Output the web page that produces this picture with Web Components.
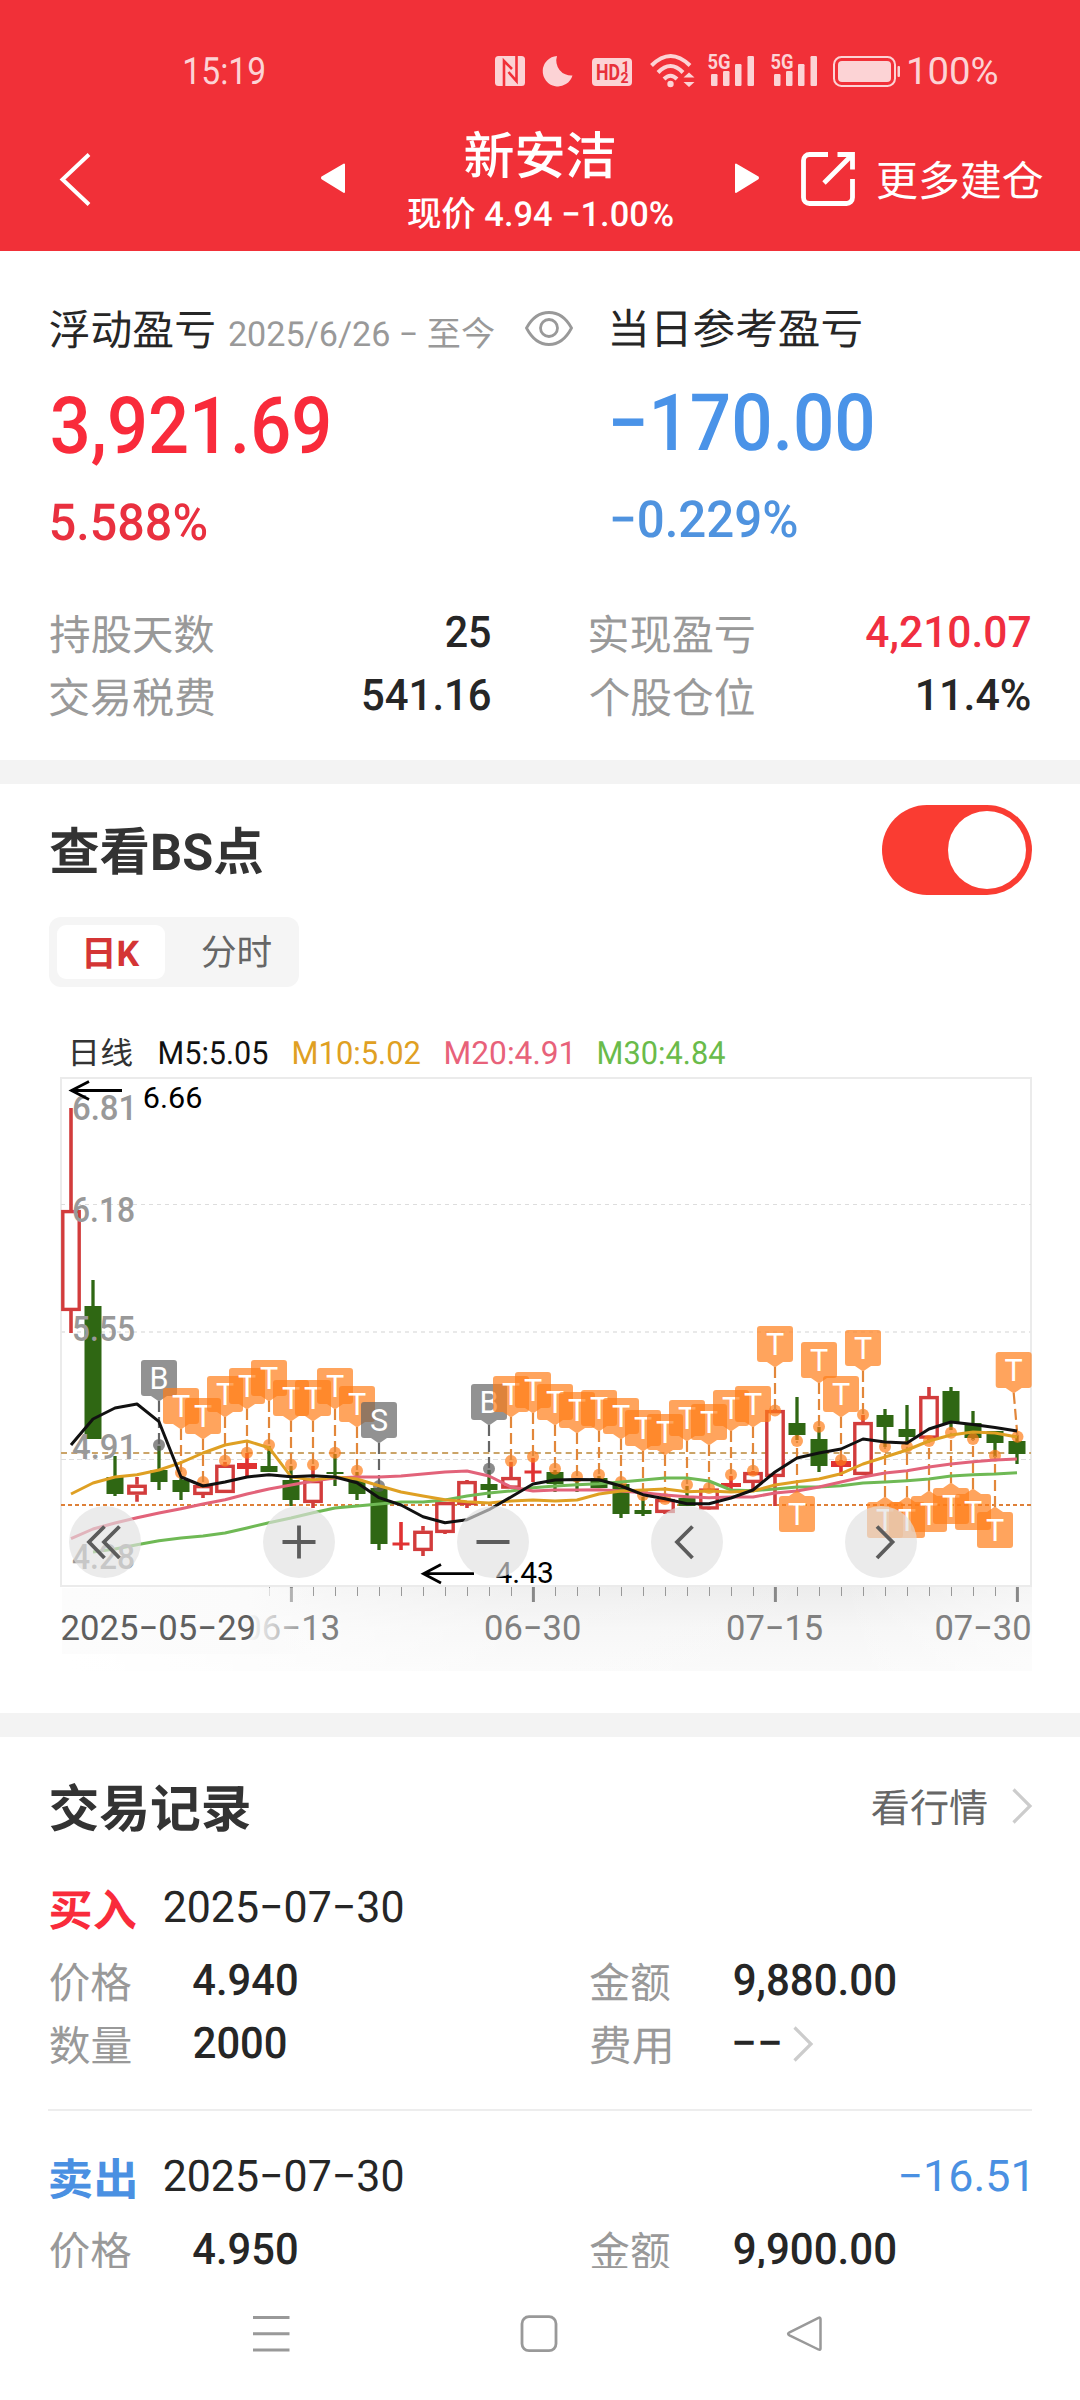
<!DOCTYPE html>
<html lang="zh-CN">
<head>
<meta charset="utf-8">
<title>新安洁</title>
<style>
html,body{margin:0;padding:0;background:#fff}
body{width:1080px;height:2400px;overflow:hidden;font-family:Roboto,"Noto Sans CJK SC",sans-serif;color:#262626}
</style>
</head>
<body>
<position-page></position-page>
<script>
const FAMILY = 'Roboto, "Noto Sans CJK SC", sans-serif';
const pen = document.createElement('canvas').getContext('2d');

/* Ink extents of a text, measured at ten times its size so that rounding does not matter. */
function ink(t, s, wt) {
  pen.font = `${wt} ${s * 10}px ${FAMILY}`;
  const m = pen.measureText(t);
  return { left: m.actualBoundingBoxLeft / 10, width: (m.actualBoundingBoxLeft + m.actualBoundingBoxRight) / 10 };
}

function define(name, html) {
  customElements.define(name, class extends HTMLElement {
    connectedCallback() {
      if (this.shadowRoot) return;
      const root = this.attachShadow({ mode: 'open' });
      const tpl = document.createElement('template');
      tpl.innerHTML = typeof html === 'function' ? html(this) : html;
      root.append(tpl.content.cloneNode(true));
    }
  });
}

/* A single line of text whose ink spans exactly `w` pixels; the box is one cap height tall and ends on the baseline. */
customElements.define('fit-text', class extends HTMLElement {
  connectedCallback() {
    if (this.shadowRoot) return;
    const w = +this.getAttribute('w'), s = +this.getAttribute('s'), wt = this.getAttribute('wt') || 400;
    const text = this.getAttribute('t');
    const root = this.attachShadow({ mode: 'open' });
    const m = ink(text, s, wt), k = w / m.width;
    const h = (s * 0.711).toFixed(2);
    root.innerHTML = `<style>
      :host{display:block;flex:none;width:${w}px;height:${h}px}
      span{display:block;width:max-content;white-space:pre;text-rendering:geometricPrecision;font:${wt} ${s}px/${h}px ${FAMILY};transform-origin:0 0;
      transform:translate(${(m.left * k).toFixed(2)}px,${(s * 0.0136).toFixed(2)}px) scaleX(${k.toFixed(4)})}
    </style><span></span>`;
    root.querySelector('span').textContent = text;
  }
});
const T = (t, w, s, style = '', wt = 400) => `<fit-text t="${t}" w="${w}" s="${s}" wt="${wt}" style="${style}"></fit-text>`;
const ROW = `.r{display:flex;align-items:flex-end;box-sizing:border-box}`;

define('signal-icon', `<style>:host{display:block;flex:none;width:46px;height:36px}svg{display:block;overflow:visible}</style>
<svg width="46" height="36" viewBox="708 52 46 36" fill="#fcd3d5"><text x="707.5" y="69" font-family="Roboto" font-weight="700" font-size="20.5" textLength="23" lengthAdjust="spacingAndGlyphs">5G</text>
<rect x="711" y="74" width="6.5" height="12" rx="1.2"/><rect x="723" y="71" width="6.5" height="15" rx="1.2"/><rect x="735" y="64" width="6.5" height="22" rx="1.2"/><rect x="747.5" y="56" width="6.5" height="30" rx="1.2"/></svg>`);

define('status-bar', `<style>
:host{display:flex;height:36px;padding-top:52px;padding-left:185px;color:#fcd3d5}
svg{display:block;flex:none;overflow:visible}.c{display:flex;align-items:flex-end;height:32.500px}
</style>
<div class="c">${T('15:19', 79, 37.5)}</div>
<svg style="margin-left:231px" width="30" height="36" viewBox="495 52 30 36"><rect x="495" y="56" width="30" height="30" rx="3.5" fill="#fcd3d5"/><path d="M504 86V61l8 8M516.500 56v25l-8-9" fill="none" stroke="#f13038" stroke-width="2.600"/></svg>
<svg style="margin-left:18px" width="30" height="36" viewBox="543 52 30 36"><path d="M557 56A15.200 15.200 0 1 0 572.500 75.500A15 15 0 0 1 557 56z" fill="#fcd3d5"/></svg>
<svg style="margin-left:19px" width="40" height="36" viewBox="592 52 40 36"><rect x="592" y="58" width="40" height="28" rx="4" fill="#fcd3d5"/><g fill="#e8303a" font-family="Roboto" font-weight="700"><text x="596" y="80" font-size="22" textLength="24" lengthAdjust="spacingAndGlyphs">HD</text><text x="621.500" y="71.500" font-size="14">1</text><text x="620.500" y="83" font-size="14">2</text></g></svg>
<svg style="margin-left:18px" width="45" height="36" viewBox="650 52 45 36"><g fill="none" stroke="#fcd3d5" stroke-width="4"><path d="M651.500 65.500Q670.500 46.500 690 65.500M658 72.500Q670.500 59.500 683 72.500M664 79Q670.500 72.500 677 79"/></g><circle cx="670.500" cy="84" r="3.200" fill="#fcd3d5"/><path d="M683.500 77.500l5.500-5 5.500 5zM683.500 82l5.500 5 5.500-5z" fill="#fcd3d5"/></svg>
<signal-icon style="margin-left:13px"></signal-icon>
<signal-icon style="margin-left:17px"></signal-icon>
<svg style="margin-left:16px" width="67" height="36" viewBox="833 52 67 36"><rect x="834" y="57" width="61" height="29" rx="7.500" fill="none" stroke="#fcd3d5" stroke-width="2"/><rect x="838" y="61" width="53" height="21" rx="4" fill="#fcd3d5"/><rect x="897.500" y="66" width="2.500" height="11" rx="1" fill="#fcd3d5"/></svg>
<div class="c" style="margin-left:8.500px">${T('100%', 88.5, 37.5)}</div>`);

define('app-header', `<style>
:host{display:block;height:251px;background:#f13038;color:#fff}
.bar{display:flex;height:163px}svg{display:block;flex:none}${ROW}
.mid{width:265px;margin-left:62px}
</style>
<status-bar></status-bar>
<div class="bar">
<svg style="margin:62px 0 0 58px" width="34" height="60" viewBox="58 150 34 60"><path d="M89 154.500L62.500 179.500L89 204.500" fill="none" stroke="#fff" stroke-width="4"/></svg>
<svg style="margin:72px 0 0 228px" width="26" height="36" viewBox="320 160 26 36"><path d="M344 164.500V192L322.500 178.700Q321.500 178 322.500 177z" fill="#fff" stroke="#fff" stroke-width="2" stroke-linejoin="round"/></svg>
<div class="mid"><div class="r" style="height:87px;padding-left:57px">${T('新安洁', 149, 51, '', 500)}</div>
<div class="r" style="height:53px">${T('现价 4.94 −1.00%', 265, 34.500, '', 500)}</div></div>
<svg style="margin:72px 0 0 61px" width="26" height="36" viewBox="734 160 26 36"><path d="M736 164.500V192L757.500 178.700Q758.500 178 757.500 177z" fill="#fff" stroke="#fff" stroke-width="2" stroke-linejoin="round"/></svg>
<svg style="margin:62px 0 0 40px" width="58" height="60" viewBox="800 150 58 60"><path d="M828 154.500H809.500a6 6 0 0 0-6 6V197.500a6 6 0 0 0 6 6H846.500a6 6 0 0 0 6-6V179M837.500 154.500H852.500V169.500M852 155L824 183" fill="none" stroke="#fff" stroke-width="4.800"/></svg>
<div class="r" style="height:109px;margin-left:20px">${T('更多建仓', 165, 42)}</div>
</div>`);

define('profit-summary', `<style>
:host{display:block;height:509px}svg{display:block;flex:none}${ROW}.g{color:#999}.red{color:#ee2e3e}.blue{color:#4a91e4}
</style>
<div class="r" style="height:95px;padding-left:49.500px">${T('浮动盈亏', 164, 42)}
${T('2025/6/26 − 至今', 265, 34.500, 'margin:0 0 -2px 15.500px;color:#999')}
<svg style="margin:0 0 -1px 28px" width="54" height="38" viewBox="522 309 54 38" fill="none" stroke="#999" stroke-width="2.800"><path d="M526.500 328C533 316 541 312.500 549 312.500S565 316 571.500 328C565 340.500 557 344.500 549 344.500S533 340.500 526.500 328z"/><circle cx="549" cy="328" r="8.500"/></svg>
${T('当日参考盈亏', 249, 42, 'margin:0 0 1px 36px')}</div>
<div class="r" style="height:108px;padding-left:52px">${T('3,921.69', 276.500, 79, 'color:#f92b3b', 500)}${T('−170.00', 261, 79, 'margin:0 0 3px 283.500px;color:#4a93e8', 500)}</div>
<div class="r" style="height:87.500px;padding-left:50.500px">${T('5.588%', 155.5, 51, 'color:#e9303f', 500)}${T('−0.229%', 185, 51, 'margin:0 0 3.500px 406px;color:#4f93df', 500)}</div>
<div class="r" style="height:109px;padding-left:50px">${T('持股天数', 164, 42, 'color:#999')}${T('25', 44, 43.500, 'margin:0 0 3px 232px', 500)}${T('实现盈亏', 164, 42, 'color:#999;margin-left:100px')}${T('4,210.07', 164, 43.500, 'margin:0 0 3px 112px;color:#f02e40', 500)}</div>
<div class="r" style="height:63px;padding-left:50px">${T('交易税费', 164, 42, 'color:#999')}${T('541.16', 127, 43.500, 'margin:0 0 3px 149px', 500)}${T('个股仓位', 164, 42, 'color:#999;margin-left:100px')}${T('11.4%', 112, 43.500, 'margin:0 0 3px 164px', 500)}</div>`);

define('toggle-switch', `<style>:host{display:flex;box-sizing:border-box;width:150px;height:90px;padding:6px;justify-content:flex-end;border-radius:45px;background:#fa3c32}i{width:78px;height:78px;border-radius:50%;background:#fff}</style><i></i>`);

define('period-tabs', `<style>
:host{display:flex;box-sizing:border-box;width:250px;height:70px;padding:8px;border-radius:12px;background:#f5f5f5}
div{display:flex;align-items:flex-end;justify-content:center;height:54px;box-sizing:border-box;padding-bottom:12px}
.on{width:108px;padding-left:4px;background:#fff;border-radius:9px;color:#d43535}.off{width:126px;padding-left:16px;color:#666}
</style><div class="on">${T('日K', 54, 35.500, '', 700)}</div><div class="off">${T('分时', 69, 36)}</div>`);

/* Candles: [kind, high, body top, body bottom, low]; g falling, r rising hollow, f rising solid. */
const CANDLES = [
['r',1108,1210,1311,1333],['g',1280,1306,1439,1439],['g',1456,1477,1494,1496],['r',1477,1484.700,1494.700,1501.700],['g',1446,1470,1482,1490],['g',1478,1480,1492,1500],['r',1484,1485,1495,1498],['r',1462,1464.700,1493,1493],['f',1453,1463,1469,1476],['g',1446,1466,1472,1472],['g',1466,1480,1500,1506],
['r',1466,1480,1503,1508],['g',1454,1472,1474,1486],['g',1472,1480,1494,1500],['g',1487,1488,1544,1550],['f',1522,1542.500,1545.500,1550],['r',1526,1530.700,1551,1556],['r',1502,1502,1533,1534],['r',1480,1481,1505,1508],['g',1470,1484,1490,1498],['r',1462,1477,1488.700,1488.700],['f',1458,1470.500,1473.500,1482],
['g',1470,1472,1484,1492],['g',1478,1479,1481,1492],['g',1476,1478,1488,1488],['g',1482,1484,1514,1518],['g',1497,1510,1514,1516],['r',1498,1499,1513,1514],['g',1486,1498,1506,1506],['r',1488,1488.500,1509.500,1510],['f',1476,1483,1487,1489],['r',1471,1472,1483,1490],['r',1409,1410,1477,1506],
['g',1397,1423,1435,1440],['g',1427,1439,1466,1472],['f',1460,1461,1467,1476],['r',1415,1422,1475,1475],['g',1409,1415,1427,1447],['g',1405,1429,1437,1445],['r',1387,1396,1438.700,1440],['g',1387,1391,1423,1430],['g',1411,1423,1438,1440],['g',1431,1431,1443,1457],['g',1435,1441,1454,1464]];
/* Trade marks: [candle, letter, anchor y, badge top]. */
const MARKS = [[4,'B',1445,1360],[5,'T',1472.700,1388],[6,'T',1482,1398],[7,'T',1460.700,1376],[8,'T',1452.700,1368],[9,'T',1445,1360],[10,'T',1464.700,1380],[11,'T',1464.700,1380],[12,'T',1452.700,1368],[13,'T',1470.700,1386],[14,'S',1486,1402],
[19,'B',1468.700,1384],[20,'T',1461,1376],[21,'T',1456.700,1372],[22,'T',1468.700,1384],[23,'T',1476.700,1392],[24,'T',1474.700,1390],[25,'T',1482,1398],[26,'T',1495,1410],[27,'T',1499,1414],[28,'T',1484.700,1400],[29,'T',1488,1404],[30,'T',1474.700,1390],[31,'T',1470.700,1386],[32,'T',1410.500,1326],
[33,'T',1441,1496],[34,'T',1426.700,1342],[35,'T',1460,1376],[36,'T',1414.700,1330],[37,'T',1446.700,1502],[38,'T',1446.700,1502],[39,'T',1441,1496],[40,'T',1432.700,1488],[41,'T',1439,1494],[42,'T',1455.700,1512],[43,'T',1436.700,1352]];
const LINES = {
'#111':[0,1445,1419,1408,1404,1421.700,1477,1486,1482,1477,1474.700,1476.700,1475.700,1477,1482.700,1497.700,1505,1516.700,1522.700,1519.700,1509.700,1497,1484,1480,1479.500,1479.700,1486,1494.700,1498.700,1503.700,1503.700,1498,1490,1472,1458,1453,1449,1439,1442,1443,1429,1422,1424.500,1427.500,1431],
'#dfa023':[0,1494,1483,1477,1474.700,1470,1462.700,1453,1445,1441,1447.700,1476.700,1480,1477,1479,1485.700,1492,1496,1499.700,1501.700,1503,1501,1500,1501,1500,1494,1491,1490,1489,1491.700,1491,1492,1491,1485,1481.700,1479,1473.700,1464,1457,1450,1441,1435,1432,1433,1437],
'#e2637a':[0,1538.700,1529,1523,1517.700,1513,1508.700,1504,1499.700,1494,1489,1485,1481,1478,1477,1477,1476,1474,1472,1471,1476,1487,1491,1490,1490,1489.700,1491,1492.700,1495,1496.700,1497.700,1497,1497,1493,1491,1487,1482,1477,1473,1470.700,1467,1464,1461.700,1460,1459],
'#6fb955':[1,1552,1549,1544.700,1540.700,1538,1536,1533,1528,1522.700,1518,1512.700,1508,1506,1504,1502,1502,1500,1496,1493,1491,1487.700,1486,1484.700,1483.700,1482,1480,1478,1478,1481,1490,1490.700,1489,1487,1487,1485.700,1483,1482,1480.700,1479,1476,1474.700,1474,1472.700]};
const X = i => 71 + 22 * i;

function label(t, x, baseline, w, s, fill, wt = 400) {
  const m = ink(t, s, wt), k = w / m.width;
  return `<text transform="translate(${x + m.left * k} ${baseline}) scale(${k} 1)" font-family='${FAMILY}' font-size="${s}" font-weight="${wt}" fill="${fill}">${t}</text>`;
}
function candle([k, hi, a, b, lo], i) {
  const x = X(i), c = k === 'g' ? '#2f6713' : k === 'r' ? '#d23c3c' : '#e03232';
  if (k === 'g') return `<path d="M${x} ${hi}V${lo}" stroke="${c}" stroke-width="3.300"/><rect x="${x - 8.500}" y="${a}" width="17" height="${b - a}" fill="${c}"/>`;
  if (k === 'f') { const h = b - a > 3.500 ? 10 : 8.500; return `<path d="M${x} ${hi}V${lo}" stroke="${c}" stroke-width="3.600"/><rect x="${x - h}" y="${a}" width="${2 * h}" height="${b - a}" fill="${c}"/>`; }
  return `<path d="M${x} ${hi}V${a}M${x} ${b}V${lo}" stroke="${c}" stroke-width="3.600"/><rect x="${x - 8.200}" y="${a + 1.600}" width="16.400" height="${b - a - 3.200}" fill="#fff" stroke="${c}" stroke-width="3.400"/>`;
}
function anchor([i, ch, cy, top]) {
  const x = i === 43 ? 1017.500 : X(i), bx = i === 43 ? 1013.700 : x, tip = top > cy ? top - 5 : top + 41, t = ch === 'T';
  return `<circle cx="${x}" cy="${cy}" r="6" fill="${t ? 'rgba(255,126,24,.7)' : 'rgba(90,90,90,.7)'}"/><path d="M${bx} ${tip}L${x} ${cy}" stroke="${t ? '#e2873a' : '#666'}" stroke-width="2.200" stroke-dasharray="11 5"/>`;
}
function badge([i, ch, cy, top]) {
  const x = i === 43 ? 1013.700 : X(i), t = ch === 'T', y = top, b = y + 36;
  const tip = top > cy ? `M${x - 8} ${y}L${x} ${y - 5.500}L${x + 8} ${y}z` : `M${x - 8} ${b}L${x} ${b + 5.500}L${x + 8} ${b}z`;
  return `<path d="M${x - 15} ${y}H${x + 15}a3 3 0 0 1 3 3V${b - 3}a3 3 0 0 1-3 3H${x - 15}a3 3 0 0 1-3-3V${y + 3}a3 3 0 0 1 3-3z${tip}" fill="${t ? 'rgba(255,126,24,.7)' : 'rgba(100,100,100,.7)'}"/><text x="${x}" y="${y + 28.700}" font-family="Roboto" font-size="30.500" fill="#fff" text-anchor="middle">${ch}</text>`;
}
function ticks() {
  let s = '';
  for (let i = 9; i < 44; i++) s += i % 11 === 10 ? `<path d="M${X(i) + .4} 1587V1602" stroke="#888" stroke-width="3"/>` : `<path d="M${X(i) + .5} 1587V1596" stroke="#999" stroke-width="1"/>`;
  return s;
}
const button = (x, d) => `<circle cx="${x}" cy="1542" r="36" fill="rgba(224,224,224,.65)"/><path d="${d}" fill="none" stroke="#5c5c5c" stroke-width="3.800"/>`;

define('k-chart', () => `<style>:host{display:block;height:600px}svg{display:block}</style>
<svg width="1080" height="600" viewBox="0 1074 1080 600">
<defs><linearGradient id="v" x2="0" y2="1"><stop offset="0" stop-color="#ececec"/><stop offset=".5" stop-color="#f6f6f6"/><stop offset="1" stop-color="#fafafa"/></linearGradient>
<linearGradient id="h"><stop offset="0" stop-color="#fff"/><stop offset=".45" stop-color="#fff" stop-opacity=".2"/><stop offset=".8" stop-color="#fff" stop-opacity="0"/><stop offset="1" stop-color="#fff" stop-opacity=".5"/></linearGradient>
<linearGradient id="m"><stop offset="0" stop-color="#fcfcfc"/><stop offset=".74" stop-color="#fbfbfb" stop-opacity=".97"/><stop offset=".83" stop-color="#fafafa" stop-opacity=".65"/><stop offset="1" stop-color="#fafafa" stop-opacity="0"/></linearGradient></defs>
<rect x="72" y="1585" width="960" height="86" fill="url(#v)"/><rect x="71" y="1585" width="961" height="86" fill="url(#h)"/>
<rect x="61" y="1078" width="970" height="508" fill="none" stroke="#ebebeb" stroke-width="2"/>
<path d="M61 1204.500H1031" stroke="#ddd" stroke-dasharray="4 4"/><path d="M61 1332H1031" stroke="#e9e9e9" stroke-width="2" stroke-dasharray="4 4"/><path d="M61 1459.500H1031" stroke="#ddd" stroke-dasharray="5 3"/>
<path d="M61 1453H1031" stroke="#cba468" stroke-width="2" stroke-dasharray="6 4.300"/><path d="M61 1505H1031" stroke="#de8038" stroke-width="2" stroke-dasharray="4 3"/>
${CANDLES.map(candle).join('')}
${MARKS.map(anchor).join('')}
${Object.entries(LINES).reverse().map(([c, [s, ...v]]) => `<polyline fill="none" stroke="${c}" stroke-width="3" stroke-linejoin="round" points="${v.map((y, j) => X(j + s) + ',' + y).join(' ')}"/>`).join('')}
${MARKS.map(badge).join('')}
${label('6.81',73.500,1120,58,35,'#999',500)}${label('6.18',73.500,1222,60.500,35,'#999',500)}${label('5.55',73.500,1340.500,60.500,35,'#999',500)}${label('4.91',72.500,1459,59,35,'#999',500)}${label('4.28',72.500,1569,61.500,35,'#999',500)}
<g fill="none" stroke="#000" stroke-width="2.800"><path d="M122 1090.500H72M89 1081.500L71.500 1090.500L89 1099.500M474 1573.700H424M441 1564.500L423.500 1573.700L441 1583"/></g>
${label('6.66',144.700,1107.700,56.300,29,'#000')}${label('4.43',496,1583,56,29,'#000')}
${ticks()}${label('06−13',244,1640,94,35,'#808080')}
<rect x="62" y="1588" width="254" height="66" fill="url(#m)"/>
${label('2025−05−29',61.700,1640,192.300,35,'#5f5f5f')}
${label('06−30',485.700,1640,94,35,'#808080')}${label('07−15',727.700,1640,94.500,35,'#808080')}${label('07−30',936,1640,94,35,'#808080')}
${button(105,'M104.500 1526.500L89 1542L104.500 1558M119.500 1526.500L104 1542L119.500 1558')}${button(299,'M282.500 1542H315.500M299 1525.500V1558.500')}${button(493,'M476.500 1542H509.500')}${button(687,'M692.500 1526.500L677 1542L692.500 1558')}${button(881,'M877 1526.500L892.500 1542L877 1558')}
</svg>`);

define('bs-section', `<style>:host{display:block;height:929px}${ROW}.top{display:flex;justify-content:space-between;padding:21px 48px 0 50px}</style>
<div class="top"><div class="r" style="height:66px">${T('查看BS点', 212, 51, 'color:#333', 700)}</div><toggle-switch></toggle-switch></div>
<period-tabs style="margin:22px 0 0 49px"></period-tabs>
<div class="r" style="height:78px;padding-left:73px">${T('日线', 59, 31, 'color:#333')}${T('M5:5.05', 107.500, 32, 'margin-left:28px;color:#111')}${T('M10:5.02', 126, 32, 'margin-left:26.500px;color:#e0a022')}${T('M20:4.91', 124, 32, 'margin-left:26px;color:#e8627a')}${T('M30:4.84', 126, 32, 'margin-left:28.500px;color:#6abb4a')}</div>
<k-chart style="margin-top:9px"></k-chart>`);

const chev = (ml, mb) => `<svg style="margin:0 0 ${mb}px ${ml}px" width="22" height="38" viewBox="0 0 22 38"><path d="M1.500 2.500L18 19L1.500 35.500" fill="none" stroke="#ccc" stroke-width="3.200"/></svg>`;
define('trade-record', el => {
  const [side, date, price, amount, gain] = ['side', 'date', 'price', 'amount', 'gain'].map(n => el.getAttribute(n));
  const buy = side === '买入';
  return `<style>:host{display:block}${ROW}svg{display:block;flex:none}</style>
<div class="r" style="height:97px;padding-left:50px">${T(side, buy ? 86 : 85, 43.500, `color:${buy ? '#f92b3b' : '#4a90e2'}`, 700)}${T(date, 238.500, 43.500, `margin:0 0 4.500px ${buy ? 27.5 : 28.5}px`)}
${gain ? T(gain, 125.500, 43.500, 'margin:0 0 4.500px 499px;color:#4a90e2') : ''}</div>
<div class="r" style="height:71.500px;padding-left:50px">${T('价格', 81, 42, 'color:#999')}${T(price, 104, 43.500, 'margin:0 0 2.500px 62px', 500)}${T('金额', 80, 42, 'color:#999;margin-left:293px')}${T(amount, 161.500, 43.500, 'margin:0 0 2.500px 63.500px', 500)}</div>
${buy ? `<div class="r" style="height:63.500px;padding-left:50px">${T('数量', 81, 42, 'color:#999')}${T('2000', 92, 43.500, 'margin:0 0 3px 62.500px', 500)}${T('费用', 80, 42, 'color:#999;margin-left:304.500px')}${T('−−', 46, 43.500, 'margin:0 0 3px 64px', 500)}${chev(13, -1)}</div>` : ''}`;
});

define('trade-list', `<style>:host{display:block;height:531px;overflow:hidden}${ROW}svg{display:block;flex:none}hr{margin:47px 48px 0;border:0;height:2px;background:#ededed}</style>
<div class="r" style="height:91px;padding-left:50px">${T('交易记录', 200, 51, 'color:#333', 700)}${T('看行情', 115, 39, 'color:#666;margin:0 0 5px 622px')}${chev(25, 3)}</div>
<trade-record style="margin-top:2px" side="买入" date="2025−07−30" price="4.940" amount="9,880.00"></trade-record>
<hr>
<trade-record style="margin-top:-12px" side="卖出" date="2025−07−30" price="4.950" amount="9,900.00" gain="−16.51"></trade-record>`);

define('nav-bar', `<style>:host{display:flex;height:132px;padding-left:251px;background:#fff}svg{display:block;margin-top:44px}</style>
<svg width="40" height="44" viewBox="251 2312 40 44"><path d="M253 2317.500H289.500M253 2333.700H289.500M253 2350H289.500" stroke="#999" stroke-width="3"/></svg>
<svg style="margin-left:227px" width="42" height="44" viewBox="518 2312 42 44"><rect x="522" y="2316.700" width="34" height="34" rx="7" fill="none" stroke="#999" stroke-width="2.800"/></svg>
<svg style="margin-left:225px" width="42" height="44" viewBox="785 2312 42 44"><path d="M789.500 2332.300L818.500 2317.800Q820.500 2317 820.500 2319V2348.500Q820.500 2350.500 818.500 2349.500L789.500 2335.300Q786.700 2333.800 789.500 2332.300z" fill="none" stroke="#999" stroke-width="2.500"/></svg>`);

define('position-page', `<style>:host{display:block;width:1080px}.band{height:24px;background:#f3f3f3}</style>
<app-header></app-header><profit-summary></profit-summary><div class="band"></div><bs-section></bs-section><div class="band"></div><trade-list></trade-list><nav-bar></nav-bar>`);
</script>
</body>
</html>
